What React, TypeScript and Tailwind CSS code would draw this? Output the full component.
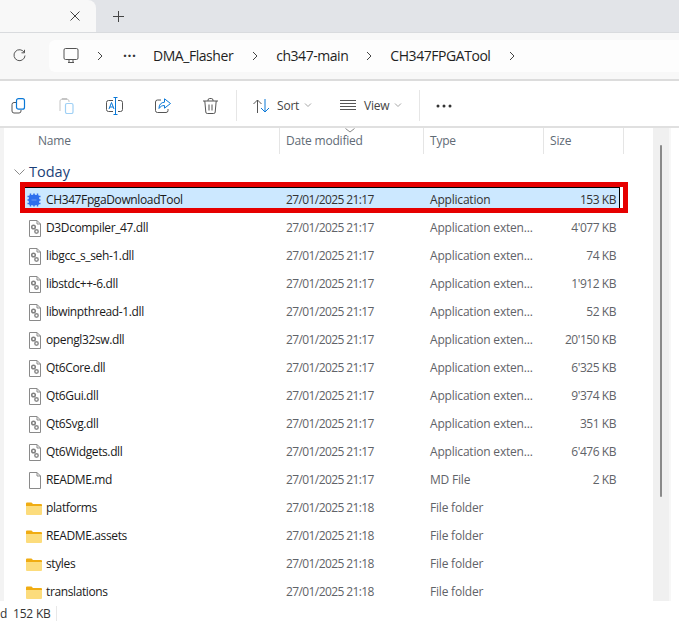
import React from "react";

const Chev = ({ className = "" }: { className?: string }) => (
  <svg width="6" height="10" viewBox="0 0 6 10" fill="none" stroke="#444" strokeWidth="1" className={className}>
    <path d="M1 1l4 4-4 4" />
  </svg>
);

const Down = ({ className = "" }: { className?: string }) => (
  <svg width="8" height="5" viewBox="0 0 8 5" fill="none" stroke="#a5a5a5" strokeWidth="1" className={className}>
    <path d="M1 0.5L4 3.500l3-3" />
  </svg>
);

const Dll = () => (
  <svg width="14" height="17" viewBox="0 0 14 17" fill="none">
    <path d="M1.500 .5h7.500l3.500 3.500v12.500h-11z" fill="#fff" stroke="#8a8a8a" />
    <path d="M9 .5v3.500h3.500" stroke="#8a8a8a" />
    <circle cx="5.500" cy="7" r="1.800" fill="#fff" stroke="#808080" strokeWidth="1.500" />
    <circle cx="8.500" cy="11.500" r="1.700" fill="#fff" stroke="#8b8b8b" strokeWidth="1.500" />
  </svg>
);

const Doc = () => (
  <svg width="14" height="17" viewBox="0 0 14 17" fill="none">
    <path d="M1.500 .5h7.500l3.500 3.500v12.500h-11z" fill="#fff" stroke="#8a8a8a" />
    <path d="M9 .5v3.500h3.500" stroke="#8a8a8a" />
  </svg>
);

const Folder = () => (
  <svg width="16" height="13" viewBox="0 0 16 13" className="-ml-[2px]">
    <path d="M0 1.500a1 1 0 0 1 1-1h4.500l1.500 1.500h8a1 1 0 0 1 1 1v1H0z" fill="#f0ac12" />
    <path d="M0 4h16v8a1 1 0 0 1-1 1H1a1 1 0 0 1-1-1z" fill="#fcdc7c" />
  </svg>
);

const Chip = () => (
  <svg width="14" height="14" viewBox="0 0 14 14" className="-ml-[1px]">
    <circle cx="7" cy="7" r="5.500" fill="#2f6fed" />
    <rect x="2" y="2" width="10" height="10" rx="1.500" fill="#2f6fed" />
    <path d="M3.500 .5v13M7 .5v13M10.500 .5v13M.5 3.500h13M.5 7h13M.5 10.500h13" stroke="#2f6fed" strokeWidth="1.500" />
    <path d="M4.500 7h5" stroke="#6a9bf5" strokeWidth="1" />
  </svg>
);

type F = { n: string; t: string; s: string; d: string; i: "dll" | "doc" | "dir" };
const rows: F[] = [
  { n: "D3Dcompiler_47.dll", d: "27/01/2025 21:17", t: "Application exten...", s: "4'077 KB", i: "dll" },
  { n: "libgcc_s_seh-1.dll", d: "27/01/2025 21:17", t: "Application exten...", s: "74 KB", i: "dll" },
  { n: "libstdc++-6.dll", d: "27/01/2025 21:17", t: "Application exten...", s: "1'912 KB", i: "dll" },
  { n: "libwinpthread-1.dll", d: "27/01/2025 21:17", t: "Application exten...", s: "52 KB", i: "dll" },
  { n: "opengl32sw.dll", d: "27/01/2025 21:17", t: "Application exten...", s: "20'150 KB", i: "dll" },
  { n: "Qt6Core.dll", d: "27/01/2025 21:17", t: "Application exten...", s: "6'325 KB", i: "dll" },
  { n: "Qt6Gui.dll", d: "27/01/2025 21:17", t: "Application exten...", s: "9'374 KB", i: "dll" },
  { n: "Qt6Svg.dll", d: "27/01/2025 21:17", t: "Application exten...", s: "351 KB", i: "dll" },
  { n: "Qt6Widgets.dll", d: "27/01/2025 21:17", t: "Application exten...", s: "6'476 KB", i: "dll" },
  { n: "README.md", d: "27/01/2025 21:17", t: "MD File", s: "2 KB", i: "doc" },
  { n: "platforms", d: "27/01/2025 21:18", t: "File folder", s: "", i: "dir" },
  { n: "README.assets", d: "27/01/2025 21:18", t: "File folder", s: "", i: "dir" },
  { n: "styles", d: "27/01/2025 21:18", t: "File folder", s: "", i: "dir" },
  { n: "translations", d: "27/01/2025 21:18", t: "File folder", s: "", i: "dir" },
];

const Cells = ({ icon, f, strong }: { icon: React.ReactNode; f: F; strong?: boolean }) => (
  <>
    <div className="w-[18px] flex items-center">{icon}</div>
    <div className="w-[240px] text-[#1a1a1a] tracking-[-0.38px]">{f.n}</div>
    <div className={`w-[144px] tracking-[-0.6px] ${strong ? "text-[#333]" : "text-[#5f6368]"}`}>{f.d}</div>
    <div className={`w-[114px] ${strong ? "text-[#333]" : "text-[#5f6368]"}`}>{f.t}</div>
    <div className={`w-[72px] text-right tracking-[-0.45px] ${strong ? "text-[#333]" : "text-[#5f6368]"}`}>{f.s}</div>
  </>
);

export default function App() {
  return (
    <div className="w-[679px] h-[621px] overflow-hidden bg-white flex flex-col text-[12px] font-['Open_Sans','Liberation_Sans',sans-serif] tracking-[-0.2px]">
      {/* tabs */}
      <div className="h-[32px] shrink-0 bg-[#e2e4e8] flex items-center">
        <div className="w-[96px] h-full bg-[#f8f8f8] rounded-tr-lg flex items-center justify-end pr-[16px]">
          <svg width="10" height="10" viewBox="0 0 10 10" stroke="#444" strokeWidth="1"><path d="M.5.5l9 9M9.500.5l-9 9" /></svg>
        </div>
        <svg width="11" height="11" viewBox="0 0 11 11" stroke="#444" strokeWidth="1" className="ml-[17px]"><path d="M5.500 0v11M0 5.500h11" /></svg>
      </div>

      {/* nav */}
      <div className="h-[49px] shrink-0 bg-[#f8f8f8] border-t border-[#d9dbde] border-b-2 border-b-[#dcdcdc] flex items-center pl-[13px] pb-[1px]">
        <svg width="13" height="13" viewBox="0 0 13 13" fill="none" stroke="#555" strokeWidth="1">
          <path d="M11.300 3.500A5.500 5.500 0 1 0 12 6.500" />
          <path d="M11.500 .8v3h-3" />
        </svg>
        <div className="ml-[23px] flex-1 h-[32px] bg-[#fdfdfd] rounded-l-md flex items-center text-[14px] text-[#1f1f1f] tracking-[-0.45px]">
          <svg width="16" height="16" viewBox="0 0 16 16" fill="none" stroke="#555" className="ml-[14px]">
            <rect x="1" y=".5" width="14" height="11" rx="1.500" />
            <path d="M5 14.500h6M6 12v2M10 12v2" />
          </svg>
          <Chev className="ml-[18px]" />
          <span className="ml-[20px] w-[13px] tracking-[0.5px] font-bold text-[#333] leading-none">···</span>
          <span className="ml-[17px]">DMA_Flasher</span>
          <Chev className="ml-[19px]" />
          <span className="ml-[18px]">ch347-main</span>
          <Chev className="ml-[18px]" />
          <span className="ml-[18px]">CH347FPGATool</span>
          <Chev className="ml-[19px]" />
        </div>
      </div>

      {/* command bar */}
      <div className="h-[47px] shrink-0 border-b-2 border-[#e0e0e0] flex items-center pl-[11px] pt-[4px] text-[#444]">
        <svg width="16" height="16" viewBox="0 0 16 16" fill="none">
          <path d="M5 4.500H3a2 2 0 0 0-2 2V13a2 2 0 0 0 2 2h5a2 2 0 0 0 2-2v-1" stroke="#555" />
          <rect x="5.500" y=".7" width="8" height="10.500" rx="2" stroke="#0a78d7" strokeWidth="1.200" />
        </svg>
        <svg width="15" height="16" viewBox="0 0 15 16" fill="none" className="ml-[32px]">
          <path d="M1 13V3a1.500 1.500 0 0 1 1.500-1.500h6A1.500 1.500 0 0 1 10 3v1M3 1.500V.5h5v1" stroke="#c5c5c5" />
          <rect x="6.500" y="5.500" width="7.500" height="10" rx="1.500" stroke="#9fd0f5" strokeWidth="1.200" />
        </svg>
        <svg width="17" height="18" viewBox="0 0 17 18" fill="none" className="ml-[32px]">
          <path d="M7 3.500H2.500a2 2 0 0 0-2 2v7a2 2 0 0 0 2 2H7M12 3.500h2.500a2 2 0 0 1 2 2v7a2 2 0 0 1-2 2H12" stroke="#555" />
          <path d="M9.500.5v17M7.500.5h4M7.500 17.500h4" stroke="#0a78d7" />
          <path d="M3 12l2.500-6.500L8 12M3.800 10h3.400" stroke="#0a78d7" />
        </svg>
        <svg width="16" height="15" viewBox="0 0 16 15" fill="none" className="ml-[32px]">
          <path d="M6 2H2.500a2 2 0 0 0-2 2v8.500a2 2 0 0 0 2 2H11a2 2 0 0 0 2-2V11" stroke="#555" />
          <path d="M9.500.8l6 4.700-6 4.700V7.500c-2.500 0-4 .8-5.500 3 0-4 2-6 5.500-6.300z" stroke="#0a78d7" fill="#fff" />
        </svg>
        <svg width="15" height="16" viewBox="0 0 15 16" fill="none" stroke="#555" className="ml-[32px]">
          <path d="M0 3h15M5 3V2.200A1.700 1.700 0 0 1 6.700.5h1.600A1.700 1.700 0 0 1 10 2.200V3M1.800 3l1 11a1.500 1.500 0 0 0 1.500 1.500h6.400a1.500 1.500 0 0 0 1.500-1.500l1-11M6 6.500v6M9 6.500v6" />
        </svg>
        <div className="ml-[18px] w-px h-[31px] bg-[#e6e6e6]" />
        <svg width="17" height="14" viewBox="0 0 17 14" fill="none" className="ml-[16px]">
          <path d="M4.500 14V1M.5 5l4-4 4 4" stroke="#555" />
          <path d="M12 0v13M8 9l4 4 4-4" stroke="#0a78d7" />
        </svg>
        <span className="ml-[7px] w-[27px]">Sort</span>
        <Down />
        <svg width="16" height="11" viewBox="0 0 16 11" stroke="#555" className="ml-[28px]">
          <path d="M0 .5h16M0 3.500h16M0 6.500h16M0 9.500h16" />
        </svg>
        <span className="ml-[8px] w-[30px]">View</span>
        <Down />
        <div className="ml-[17px] w-px h-[31px] bg-[#e6e6e6]" />
        <svg width="16" height="4" viewBox="0 0 16 4" fill="#333" className="ml-[16px]">
          <circle cx="2" cy="2" r="1.500" /><circle cx="8" cy="2" r="1.500" /><circle cx="14" cy="2" r="1.500" />
        </svg>
      </div>

      {/* body */}
      <div className="flex-1 min-h-0 flex">
        <div className="w-[4px] bg-[#f3f3f3]" />
        <div className="w-[649px] flex flex-col min-h-0">
          {/* header */}
          <div className="h-[26px] shrink-0 flex text-[#5f6b76] relative">
            <div className="w-[276px] pl-[34px] border-r border-[#e5e5e5] flex items-center">Name</div>
            <div className="w-[144px] pl-[6px] border-r border-[#e5e5e5] flex items-center relative">
              Date modified
              <svg width="10" height="5" viewBox="0 0 10 5" fill="none" stroke="#888" className="absolute left-[65px] top-0">
                <path d="M.5.5L5 4 9.500.5" />
              </svg>
            </div>
            <div className="w-[120px] pl-[6px] border-r border-[#e5e5e5] flex items-center">Type</div>
            <div className="w-[80px] pl-[6px] border-r border-[#e5e5e5] flex items-center">Size</div>
          </div>
          {/* group */}
          <div className="h-[31px] shrink-0 flex items-center pl-[10px] pt-[5px] text-[14.500px] text-[#1b3f78] tracking-normal">
            <svg width="11" height="6" viewBox="0 0 11 6" fill="none" stroke="#8a8a8a" className="mr-[4px]">
              <path d="M.5.5l5 5 5-5" />
            </svg>
            Today
          </div>
          {/* rows */}
          <div className="flex-1 min-h-0">
            <div className="h-[28px] pl-[24px] pt-[2px] flex items-center relative">
              <div className="absolute left-[16px] top-[-3px] w-[608px] h-[31px] border-[5px] border-[#e60000] bg-[#cce8ff]">
                <div className="absolute inset-x-0 top-0 h-px bg-black" />
                <div className="absolute right-[3px] top-0 bottom-0 w-px bg-black" />
                <div className="absolute right-0 top-0 bottom-0 w-[3px] bg-white" />
              </div>
              <div className="relative flex items-center">
                <Cells strong icon={<Chip />} f={{ n: "CH347FpgaDownloadTool", d: "27/01/2025 21:17", t: "Application", s: "153 KB", i: "dll" }} />
              </div>
            </div>
            {rows.map((f) => (
              <div key={f.n} className="h-[28px] pl-[24px] pt-[2px] flex items-center">
                <Cells
                  f={f}
                  icon={f.i === "dll" ? <Dll /> : f.i === "doc" ? <Doc /> : <Folder />}
                />
              </div>
            ))}
          </div>
        </div>
        {/* scrollbar */}
        <div className="w-[16px] bg-[#f0f0f0] flex justify-center pt-[17px]">
          <div className="w-[2px] h-[352px] bg-[#8a8a8a] rounded-full" />
        </div>
        <div className="w-[10px] border-l-2 border-[#f7f7f7]" />
      </div>

      {/* status */}
      <div className="h-[20px] shrink-0 relative bg-white flex items-center pt-[4px] text-[#333] whitespace-pre">
        <span className="w-[57px] h-[15px] leading-[15px] border-r border-[#e8e8e8]">d  152 KB</span>
      </div>
    </div>
  );
}
